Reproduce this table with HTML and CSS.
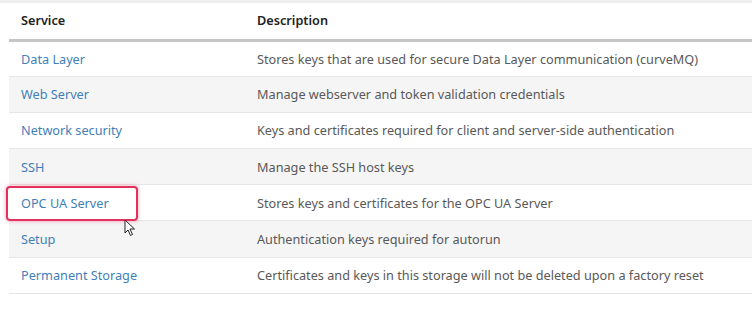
FILE: index.html
```html
<!DOCTYPE html>
<html lang="en">
<head>
    <meta charset="UTF-8">
    <title>Certificates</title>
    <link rel="stylesheet" href="styles.css">
</head>
<body>
    <div class="topstrip"></div>
    <div class="wrap">
        <table class="services">
            <thead>
                <tr>
                    <th class="col1">Service</th>
                    <th>Description</th>
                </tr>
            </thead>
            <tbody>
                <tr>
                    <td class="col1"><a href="#">Data Layer</a></td>
                    <td>Stores keys that are used for secure Data Layer communication (curveMQ)</td>
                </tr>
                <tr>
                    <td class="col1"><a href="#">Web Server</a></td>
                    <td>Manage webserver and token validation credentials</td>
                </tr>
                <tr>
                    <td class="col1"><a href="#">Network security</a></td>
                    <td>Keys and certificates required for client and server-side authentication</td>
                </tr>
                <tr>
                    <td class="col1"><a href="#">SSH</a></td>
                    <td>Manage the SSH host keys</td>
                </tr>
                <tr>
                    <td class="col1 marked"><a href="#">OPC UA Server</a><span class="mark"></span><span class="cursor"><svg width="12" height="18" viewBox="0 0 12 18"><path d="M1 1 L1 14 L4 11 L6.5 16.5 L8.5 15.5 L6 10 L10.5 10 Z" fill="#fff" stroke="#222" stroke-width="1"/></svg></span></td>
                    <td>Stores keys and certificates for the OPC UA Server</td>
                </tr>
                <tr>
                    <td class="col1"><a href="#">Setup</a></td>
                    <td>Authentication keys required for autorun</td>
                </tr>
                <tr>
                    <td class="col1"><a href="#">Permanent Storage</a></td>
                    <td>Certificates and keys in this storage will not be deleted upon a factory reset</td>
                </tr>
            </tbody>
        </table>
    </div>
</body>
</html>
```

FILE: styles.css
```css
*{
    box-sizing: border-box;
}
body{
    margin: 0;
    background-color: white;
    font-family: 'Noto Sans', sans-serif;
    font-size: 12.7px;
    color: #595959;
}
.topstrip{
    height: 3px;
    background-color: #efefef;
}
.wrap{
    padding-left: 9px;
}
.services{
    width: 100%;
    border-collapse: collapse;
}
.services th{
    text-align: left;
    font-weight: 600;
    color: #222;
    height: 37px;
    padding: 0 12px 2px;
    border-bottom: 3px solid #c6c6c6;
}
.services td{
    height: 36.2px;
    padding: 0 12px;
    border-bottom: 1px solid #e6e6e6;
}
.services tbody tr:nth-child(even){
    background-color: #f5f5f5;
}
.col1{
    width: 236px;
}
.services a{
    color: #3f7fb8;
    text-decoration: none;
}
.marked{
    position: relative;
}
.mark{
    position: absolute;
    left: -3px;
    top: 1px;
    width: 132px;
    height: 35px;
    border: 2px solid #e2315d;
    border-radius: 4px;
    box-shadow: 0 0 4px rgba(226, 49, 93, 0.45);
}
.cursor{
    position: absolute;
    left: 115px;
    top: 34px;
}
```
